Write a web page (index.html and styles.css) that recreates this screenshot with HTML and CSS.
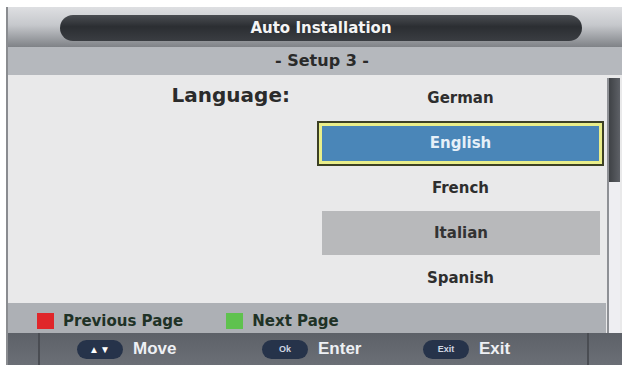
FILE: index.html
```html
<!DOCTYPE html>
<html lang="en">
<head>
    <meta charset="UTF-8">
    <title>Auto Installation</title>
    <link rel="stylesheet" href="styles.css">
</head>
<body>
    <div class="screen">
        <div class="header">
            <div class="title-pill">Auto Installation</div>
        </div>
        <div class="subtitle">- Setup 3 -</div>
        <div class="body">
            <div class="content">
                <div class="label-col">
                    <span class="label">Language:</span>
                </div>
                <div class="list">
                    <div class="item">German</div>
                    <div class="item selected">English</div>
                    <div class="item">French</div>
                    <div class="item shaded">Italian</div>
                    <div class="item">Spanish</div>
                </div>
            </div>
            <div class="scrollbar">
                <div class="track">
                    <div class="thumb"></div>
                </div>
            </div>
            <div class="legend">
                <span class="key red"></span>
                <span class="legend-text">Previous Page</span>
                <span class="key green"></span>
                <span class="legend-text">Next Page</span>
            </div>
        </div>
        <div class="nav">
            <div class="nav-inner">
                <div class="hint"><span class="pill arrows">&#9650;&#9660;</span><span class="hint-text">Move</span></div>
                <div class="hint"><span class="pill">Ok</span><span class="hint-text">Enter</span></div>
                <div class="hint"><span class="pill">Exit</span><span class="hint-text">Exit</span></div>
            </div>
        </div>
    </div>
</body>
</html>
```

FILE: styles.css
```css
body {
    margin: 0;
    background-color: #fff;
    font-family: "Liberation Sans", Arial, sans-serif;
}
.screen {
    width: 614px;
    margin: 7px 4px 0 6px;
    border-left: 2px solid #8a8c90;
}
.header {
    height: 40px;
    padding: 8px 40px 0 52px;
    box-sizing: border-box;
    background: linear-gradient(to bottom, #dedfe2 0%, #c6c8cc 45%, #7f8287 100%);
}
.title-pill {
    height: 26px;
    line-height: 26px;
    border-radius: 13px;
    background: linear-gradient(to bottom, #4a4d52 0%, #2b2e32 45%, #3a3d42 100%);
    color: #f4f4f4;
    font-family: "DejaVu Sans", sans-serif;
    font-size: 15px;
    font-weight: bold;
    text-align: center;
}
.subtitle {
    height: 28px;
    line-height: 28px;
    padding-left: 14px;
    background-color: #b5b8bd;
    color: #2a2a2a;
    font-family: "DejaVu Sans", sans-serif;
    font-size: 16px;
    font-weight: bold;
    text-align: center;
}
.body {
    display: grid;
    grid-template-columns: 598px 16px;
    grid-template-rows: 228px 30px;
}
.content {
    display: flex;
    background-color: #e9e9ea;
}
.label-col {
    width: 309px;
    padding-right: 27px;
    box-sizing: border-box;
    text-align: right;
}
.label {
    display: block;
    margin-top: 8px;
    font-family: "DejaVu Sans", sans-serif;
    font-size: 20px;
    font-weight: bold;
    color: #2b2b2b;
}
.list {
    width: 287px;
    padding-top: 1px;
}
.item {
    height: 45px;
    line-height: 45px;
    box-sizing: border-box;
    text-align: center;
    font-family: "DejaVu Sans", sans-serif;
    font-size: 15px;
    font-weight: bold;
    color: #2e2e2e;
}
.item.selected {
    border: 2px solid #3c4024;
    background-color: #4a86b8;
    box-shadow: inset 0 0 0 3px #e9ee8a;
    line-height: 41px;
    color: #e6f0f8;
}
.item.shaded {
    height: 44px;
    margin: 0 4px 1px 5px;
    line-height: 44px;
    background-color: #b8b9bb;
    color: #333;
}
.scrollbar {
    grid-row: 1 / 3;
    grid-column: 2;
    padding: 3px 2px 0 1px;
    background-color: #e9e9ea;
}
.track {
    height: 100%;
    border-left: 2px solid #8e9095;
    background-color: #eeeef2;
}
.thumb {
    height: 104px;
    background: linear-gradient(to right, #3f4246, #5d6066);
}
.legend {
    display: flex;
    align-items: center;
    padding: 6px 0 0 29px;
    background-color: #adb0b5;
}
.key {
    width: 17px;
    height: 16px;
    margin-right: 9px;
}
.key.red {
    background-color: #e0262a;
}
.key.green {
    background-color: #5fc24e;
    margin-left: 43px;
    margin-right: 9px;
}
.legend-text {
    font-family: "DejaVu Sans", sans-serif;
    font-size: 15px;
    font-weight: bold;
    color: #1f3226;
}
.nav {
    height: 32px;
    padding: 0 33px 0 30px;
    background: linear-gradient(to bottom, #5d6168, #6b6f76);
}
.nav-inner {
    display: flex;
    align-items: center;
    height: 100%;
    padding-left: 37px;
    border-left: 2px solid #4a4d53;
    border-right: 2px solid #4a4d53;
}
.hint {
    display: flex;
    align-items: center;
    flex-shrink: 0;
    width: 185px;
}
.hint:nth-child(2) {
    width: 161px;
}
.hint:last-child {
    width: auto;
}
.pill {
    width: 46px;
    height: 19px;
    line-height: 19px;
    margin-right: 10px;
    border-radius: 10px;
    background-color: #26334a;
    color: #cfd6e2;
    font-size: 9px;
    font-weight: bold;
    text-align: center;
}
.pill.arrows {
    font-size: 10px;
    color: #fff;
    letter-spacing: 1px;
}
.hint-text {
    color: #eef0f4;
    font-size: 17px;
    font-weight: bold;
}
```
